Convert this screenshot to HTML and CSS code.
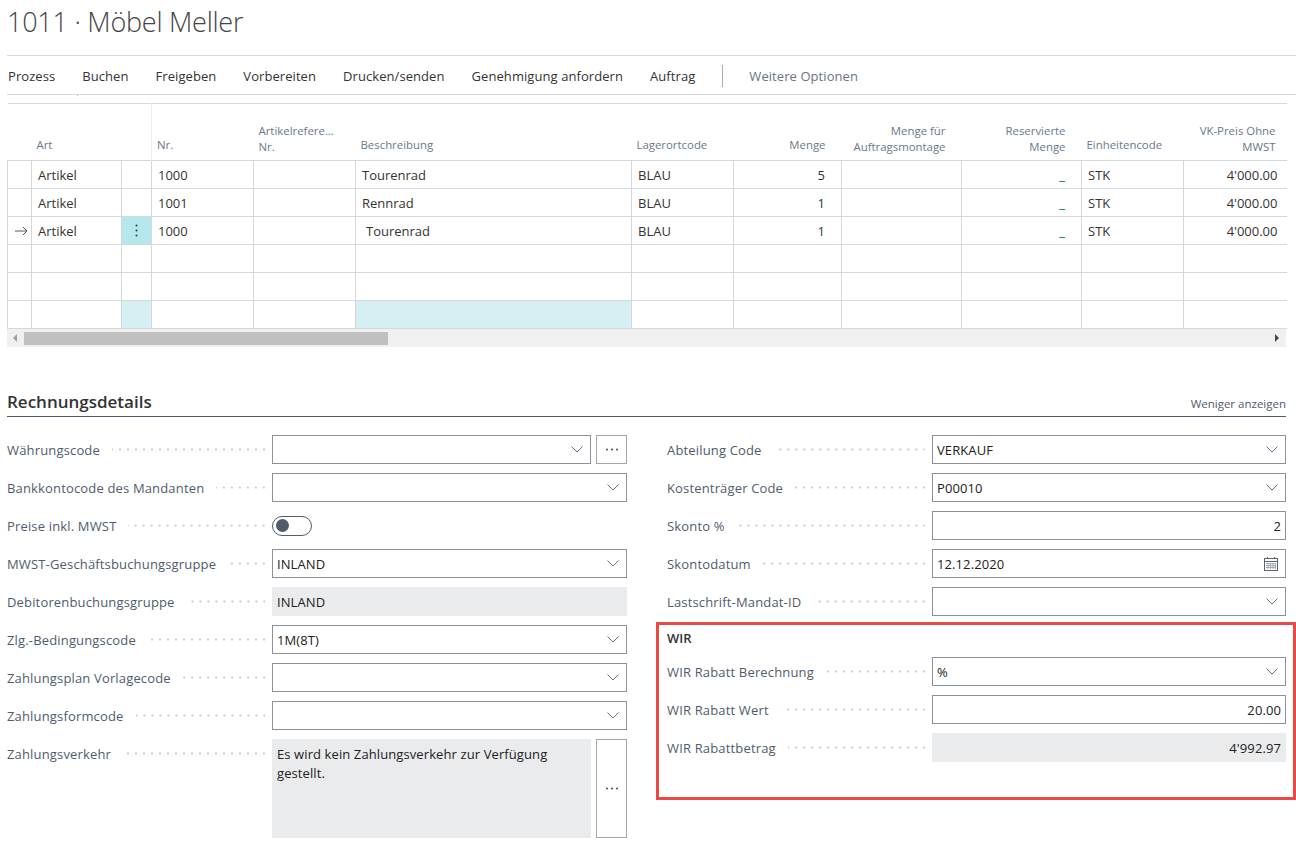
FILE: index.html
```html
<!DOCTYPE html>
<html lang="de">
<head>
  <meta charset="UTF-8">
  <title>1011 · Möbel Meller</title>
  <link rel="stylesheet" href="styles.css">
</head>
<body>
  <svg class="icon-defs" width="0" height="0">
    <symbol id="chev" viewBox="0 0 12 7"><path d="M0.5 0.5 L6 6 L11.5 0.5" fill="none" stroke="#6b7482" stroke-width="1"/></symbol>
    <symbol id="more" viewBox="0 0 14 3"><circle cx="2" cy="1.5" r="1" fill="#7a3b2e"/><circle cx="7" cy="1.5" r="1" fill="#3b4250"/><circle cx="12" cy="1.5" r="1" fill="#7a3b2e"/></symbol>
  </svg>

  <h1 class="page-title">1011 · Möbel Meller</h1>

  <nav class="toolbar">
    <a class="tool">Prozess</a>
    <a class="tool">Buchen</a>
    <a class="tool">Freigeben</a>
    <a class="tool">Vorbereiten</a>
    <a class="tool">Drucken/senden</a>
    <a class="tool">Genehmigung anfordern</a>
    <a class="tool">Auftrag</a>
    <span class="tool-sep"></span>
    <a class="tool tool-more">Weitere Optionen</a>
  </nav>
  <div class="tool-gap"><span class="tick"></span></div>

  <!-- Zeilen -->
  <table class="lines">
    <colgroup>
      <col class="w24"><col class="w90"><col class="w30"><col class="w102"><col class="w102"><col class="w276">
      <col class="w102"><col class="w108"><col class="w120"><col class="w120"><col class="w102"><col class="w103">
    </colgroup>
    <thead>
      <tr>
        <th></th><th>Art</th><th class="frozen"></th><th>Nr.</th><th class="two">Artikelrefere...<br>Nr.</th><th>Beschreibung</th><th>Lagerortcode</th>
        <th class="num">Menge</th><th class="num two">Menge für<br>Auftragsmontage</th><th class="num two">Reservierte<br>Menge</th><th>Einheitencode</th><th class="num last two">VK-Preis Ohne<br>MWST</th>
      </tr>
    </thead>
    <tbody>
      <tr>
        <td></td><td>Artikel</td><td></td><td>1000</td><td></td><td>Tourenrad</td><td>BLAU</td>
        <td class="num">5</td><td></td><td class="num"><span class="drill">_</span></td><td>STK</td><td class="num last">4'000.00</td>
      </tr>
      <tr>
        <td></td><td>Artikel</td><td></td><td>1001</td><td></td><td>Rennrad</td><td>BLAU</td>
        <td class="num">1</td><td></td><td class="num"><span class="drill">_</span></td><td>STK</td><td class="num last">4'000.00</td>
      </tr>
      <tr>
        <td class="marker"><svg width="14" height="10" viewBox="0 0 14 10"><path d="M1 5 H13 M9 1 L13 5 L9 9" fill="none" stroke="#505c6d" stroke-width="1"/></svg></td>
        <td>Artikel</td>
        <td class="cell-active"><svg width="3" height="13" viewBox="0 0 3 13"><circle cx="1.5" cy="1.5" r="1" fill="#2f3a48"/><circle cx="1.5" cy="6.5" r="1" fill="#2f3a48"/><circle cx="1.5" cy="11.5" r="1" fill="#2f3a48"/></svg></td>
        <td>1000</td><td></td><td class="indent">Tourenrad</td><td>BLAU</td>
        <td class="num">1</td><td></td><td class="num"><span class="drill">_</span></td><td>STK</td><td class="num last">4'000.00</td>
      </tr>
      <tr><td></td><td></td><td></td><td></td><td></td><td></td><td></td><td></td><td></td><td></td><td></td><td></td></tr>
      <tr><td></td><td></td><td></td><td></td><td></td><td></td><td></td><td></td><td></td><td></td><td></td><td></td></tr>
      <tr>
        <td></td><td></td><td class="cell-tint"></td><td></td><td></td><td class="cell-tint"></td><td></td><td></td><td></td><td></td><td></td><td></td>
      </tr>
    </tbody>
  </table>
  <div class="hscroll">
    <span class="arrow arrow-left"></span>
    <span class="thumb"></span>
    <span class="arrow arrow-right"></span>
  </div>

  <!-- Rechnungsdetails -->
  <div class="section-head">
    <h2>Rechnungsdetails</h2>
    <a class="less">Weniger anzeigen</a>
  </div>

  <div class="details">
    <div class="col">
      <div class="field">
        <label>Währungscode<i></i></label>
        <div class="input select"><svg class="chev"><use href="#chev"/></svg></div>
        <button class="dots-btn"><svg width="14" height="3"><use href="#more"/></svg></button>
      </div>
      <div class="field">
        <label>Bankkontocode des Mandanten<i></i></label>
        <div class="input select"><svg class="chev"><use href="#chev"/></svg></div>
      </div>
      <div class="field">
        <label>Preise inkl. MWST<i></i></label>
        <div class="toggle"><span class="knob"></span></div>
      </div>
      <div class="field">
        <label>MWST-Geschäftsbuchungsgruppe<i></i></label>
        <div class="input select">INLAND<svg class="chev"><use href="#chev"/></svg></div>
      </div>
      <div class="field">
        <label>Debitorenbuchungsgruppe<i></i></label>
        <div class="input readonly">INLAND</div>
      </div>
      <div class="field">
        <label>Zlg.-Bedingungscode<i></i></label>
        <div class="input select">1M(8T)<svg class="chev"><use href="#chev"/></svg></div>
      </div>
      <div class="field">
        <label>Zahlungsplan Vorlagecode<i></i></label>
        <div class="input select"><svg class="chev"><use href="#chev"/></svg></div>
      </div>
      <div class="field">
        <label>Zahlungsformcode<i></i></label>
        <div class="input select"><svg class="chev"><use href="#chev"/></svg></div>
      </div>
      <div class="field field-tall">
        <label>Zahlungsverkehr<i></i></label>
        <div class="input readonly memo">Es wird kein Zahlungsverkehr zur Verfügung gestellt.</div>
        <button class="dots-btn"><svg width="14" height="3"><use href="#more"/></svg></button>
      </div>
    </div>

    <div class="col">
      <div class="field">
        <label>Abteilung Code<i></i></label>
        <div class="input select">VERKAUF<svg class="chev"><use href="#chev"/></svg></div>
      </div>
      <div class="field">
        <label>Kostenträger Code<i></i></label>
        <div class="input select">P00010<svg class="chev"><use href="#chev"/></svg></div>
      </div>
      <div class="field">
        <label>Skonto %<i></i></label>
        <div class="input right">2</div>
      </div>
      <div class="field">
        <label>Skontodatum<i></i></label>
        <div class="input select">12.12.2020
          <svg class="cal" width="16" height="16" viewBox="0 0 16 16">
            <rect x="1.5" y="2.5" width="13" height="12" fill="none" stroke="#5a6473"/>
            <path d="M1.5 5.5 H14.5 M4.5 1 V3 M11.5 1 V3" stroke="#5a6473" fill="none"/>
            <path d="M3 7.5 H13 M3 9.5 H13 M3 11.5 H13 M5 7 V13 M7.500 7 V13 M10 7 V13 M12.500 7 V13" stroke="#a4abb5" fill="none"/>
          </svg>
        </div>
      </div>
      <div class="field">
        <label>Lastschrift-Mandat-ID<i></i></label>
        <div class="input select"><svg class="chev"><use href="#chev"/></svg></div>
      </div>

      <section class="wir-box">
        <h3>WIR</h3>
        <div class="wir-rows">
          <div class="field">
            <label>WIR Rabatt Berechnung<i></i></label>
            <div class="input select">%<svg class="chev"><use href="#chev"/></svg></div>
          </div>
          <div class="field">
            <label>WIR Rabatt Wert<i></i></label>
            <div class="input right">20.00</div>
          </div>
          <div class="field">
            <label>WIR Rabattbetrag<i></i></label>
            <div class="input readonly right">4'992.97</div>
          </div>
        </div>
      </section>
    </div>
  </div>
</body>
</html>
```

FILE: styles.css
```css
body {
  font-family: "Open Sans", "Noto Sans", Arial, sans-serif;
  font-size: 13px;
  margin: 0;
  padding: 0 0 0 7px;
  background-color: #fff;
  color: #212121;
}
.icon-defs {
  display: block;
  height: 0;
}
.page-title {
  height: 55px;
  margin: 0;
  font-size: 27px;
  font-weight: 300;
  line-height: 44px;
  letter-spacing: -0.25px;
  color: #444;
  box-sizing: border-box;
}

/* toolbar */
.toolbar {
  display: flex;
  align-items: center;
  height: 40px;
  box-sizing: border-box;
  border-top: 1px solid #d9d9d9;
  border-bottom: 1px solid #d9d9d9;
  padding: 1px 0 0 1px;
}
.tool {
  margin-right: 27px;
  color: #333;
  letter-spacing: 0.07px;
  white-space: nowrap;
}
.tool-sep {
  width: 1px;
  height: 22px;
  background-color: #a9adb3;
  margin-right: 26px;
}
.tool-more {
  color: #6b7482;
}
.tool-gap {
  height: 8px;
  padding-left: 70px;
}
.tick {
  display: block;
  width: 1px;
  height: 1px;
  background-color: #b5b5b5;
}

/* table */
.lines {
  border-collapse: collapse;
  table-layout: fixed;
  width: 1279px;
  border-top: 1px solid #d9d9d9;
}
.w24 { width: 24px; }
.w30 { width: 30px; }
.w90 { width: 90px; }
.w102 { width: 102px; }
.w103 { width: 103px; }
.w108 { width: 108px; }
.w120 { width: 120px; }
.w276 { width: 276px; }
.lines th {
  height: 57px;
  box-sizing: border-box;
  padding: 0 6px 7px 5px;
  vertical-align: bottom;
  text-align: left;
  font-size: 11.4px;
  font-weight: 400;
  line-height: 16px;
  color: #6b7889;
  white-space: nowrap;
  overflow: hidden;
}
.lines th.two {
  padding-bottom: 5px;
}
.lines th.frozen {
  border-right: 1px solid #ececec;
}
.lines th.num {
  text-align: right;
  padding-right: 16px;
}
.lines th.last {
  padding-right: 11px;
}
.lines td {
  height: 28px;
  box-sizing: border-box;
  padding: 0 6px;
  border: 1px solid #d5d7db;
  white-space: nowrap;
  color: #333;
  overflow: hidden;
}
.lines td:last-child {
  border-right: none;
}
.lines td.num {
  text-align: right;
  padding-right: 16px;
}
.lines td.last {
  padding-right: 9px;
}
.lines td.indent {
  padding-left: 10px;
}
.lines td.marker {
  padding: 0 0 0 6px;
  line-height: 0;
}
.lines td.cell-active {
  background-color: #b4e8ec;
  text-align: center;
  padding: 0;
  line-height: 0;
}
.lines td.cell-tint {
  background-color: #d6eff2;
}
.drill {
  color: #00665c;
}

/* scrollbar */
.hscroll {
  display: flex;
  align-items: center;
  width: 1279px;
  height: 18px;
  background-color: #f0f0f0;
}
.arrow {
  width: 0;
  height: 0;
  border-top: 4px solid transparent;
  border-bottom: 4px solid transparent;
}
.arrow-left {
  margin-left: 6px;
  border-right: 4px solid #a0a0a0;
}
.thumb {
  width: 364px;
  height: 13px;
  margin-left: 7px;
  background-color: #c0c0c0;
}
.arrow-right {
  margin-left: auto;
  margin-right: 7px;
  border-left: 4px solid #444;
}

/* section */
.section-head {
  display: flex;
  justify-content: space-between;
  align-items: flex-end;
  width: 1279px;
  height: 70px;
  box-sizing: border-box;
  border-bottom: 1px solid #505c6d;
  padding-bottom: 3px;
}
.section-head h2 {
  margin: 0;
  font-size: 17px;
  font-weight: 600;
  line-height: 22px;
  color: #333;
}
.less {
  margin-bottom: 1px;
  font-size: 11.5px;
  line-height: 17px;
  color: #505c6d;
}
.details {
  display: grid;
  grid-template-columns: 620px 619px;
  column-gap: 40px;
  width: 1279px;
  padding-top: 18px;
}
.col {
  display: flex;
  flex-direction: column;
  gap: 9px;
}

/* fields */
.field {
  display: flex;
  align-items: center;
  height: 29px;
}
.field label {
  display: flex;
  align-items: center;
  width: 258px;
  flex-shrink: 0;
  margin-right: 7px;
  color: #505c6d;
  letter-spacing: 0.16px;
  white-space: nowrap;
}
.field label i {
  flex: 1;
  height: 3px;
  margin-left: 12px;
  background-image: radial-gradient(circle, #c4c8ce 1px, transparent 1.2px);
  background-size: 8px 3px;
  background-position: calc(100% + 3px) center;
}
.input {
  flex: 1;
  display: flex;
  align-items: center;
  height: 29px;
  box-sizing: border-box;
  border: 1px solid #8a919c;
  padding: 0 4px;
  color: #212121;
  letter-spacing: 0.1px;
}
.select {
  justify-content: space-between;
}
.right {
  justify-content: flex-end;
}
.readonly {
  background-color: #eaebed;
  border-color: #eaebed;
}
.chev {
  width: 12px;
  height: 7px;
  margin: 0 3px 0 auto;
}
.cal {
  margin-right: 2px;
}
.dots-btn {
  display: flex;
  align-items: center;
  justify-content: center;
  width: 31px;
  height: 29px;
  margin-left: 5px;
  padding: 0;
  border: 1px solid #a6a6a6;
  background-color: #fff;
}
.toggle {
  display: flex;
  align-items: center;
  width: 40px;
  height: 20px;
  box-sizing: border-box;
  border: 1px solid #505c6d;
  border-radius: 10px;
  padding-left: 3px;
}
.knob {
  width: 13px;
  height: 13px;
  border-radius: 50%;
  background-color: #505c6d;
}
.field-tall {
  align-items: flex-start;
  height: 99px;
}
.field-tall label {
  height: 29px;
}
.field-tall .dots-btn {
  height: 99px;
}
.memo {
  display: block;
  height: 99px;
  padding: 5px 30px 0 4px;
  line-height: 19px;
}

/* WIR */
.wir-box {
  margin: -3px -10px 0 -11px;
  border: 3px solid #ea4a45;
  padding: 0 0 35px 8px;
}
.wir-box h3 {
  margin: 0;
  height: 32px;
  font-size: 13px;
  font-weight: 600;
  line-height: 26px;
  color: #333;
}
.wir-rows {
  display: flex;
  flex-direction: column;
  gap: 9px;
  padding-right: 7px;
}
```
